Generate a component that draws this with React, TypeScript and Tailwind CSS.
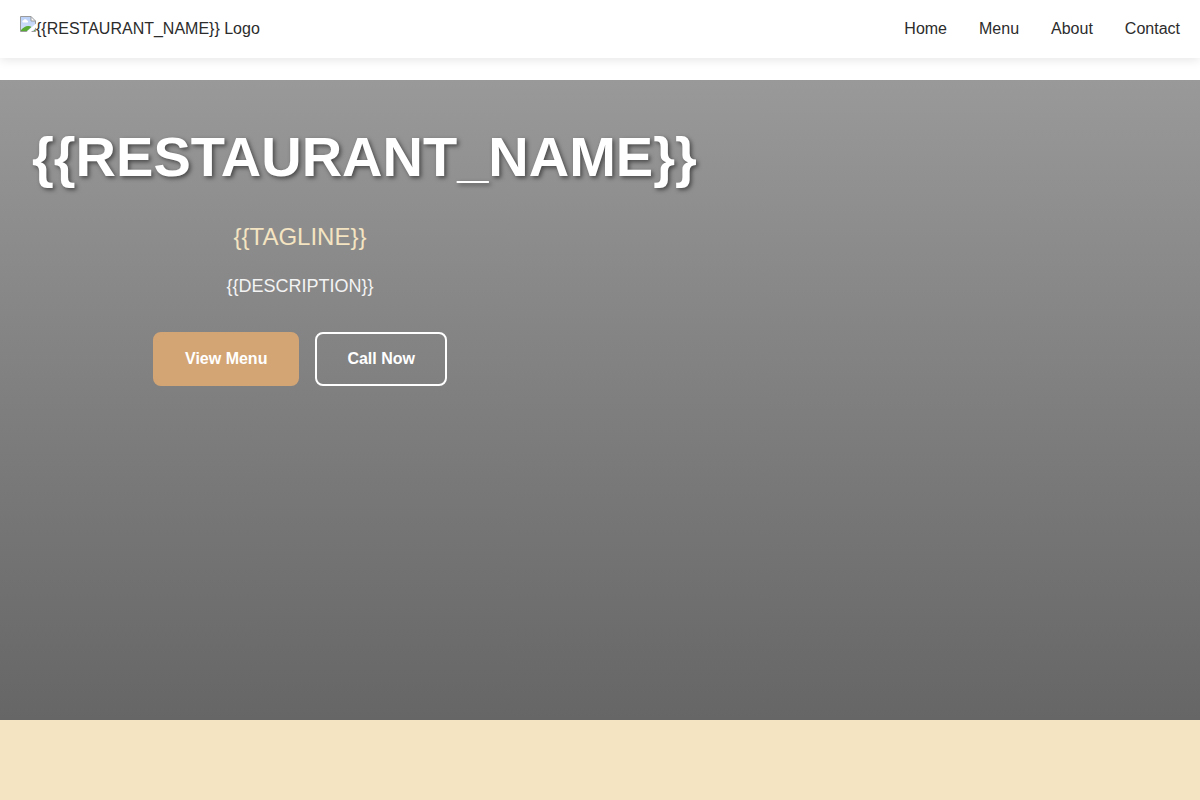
const links = [
  { label: "Home", href: "#home" },
  { label: "Menu", href: "#menu" },
  { label: "About", href: "#about" },
  { label: "Contact", href: "#contact" },
];

function BrokenImageIcon() {
  return (
    <svg className="h-4 w-4 shrink-0" viewBox="0 0 16 16" aria-hidden="true">
      <defs>
        <linearGradient id="sky" x1="0" y1="0" x2="0" y2="1">
          <stop offset="0" stopColor="#b9d0f8" />
          <stop offset="1" stopColor="#d5e2fa" />
        </linearGradient>
      </defs>
      <path d="M0.5 0.5H11L15.5 5V15.5H0.5Z" fill="url(#sky)" />
      <path
        d="M3 6.500a1.200 1.200 0 0 1 .5-2.300 1.900 1.900 0 0 1 3.500.2A1.100 1.100 0 0 1 7.500 6.500Z"
        fill="#fff"
      />
      <path
        d="M1 15V14C3 11.800 5.500 10 8 10c1.400 0 2.600.4 3.400 1L7 15Z"
        fill="#58ab35"
      />
      <path d="M13.500 15 15 13.600V15Z" fill="#58ab35" />
      <path d="M11 0.5V5H15.5Z" fill="#fff" />
      <path
        d="M0.5 0.5H11L15.5 5V15.5H0.5ZM11 0.5V5H15.5"
        fill="none"
        stroke="#9b9b9b"
      />
      <path d="M6.500 16 16 7.500V11.500L11 16Z" fill="#fff" />
    </svg>
  );
}

export default function App() {
  return (
    <div className="flex min-h-screen flex-col bg-white font-['Liberation_Sans',Arial,sans-serif] text-base leading-[26px] text-[#2c2c2c]">
      <header className="sticky top-0 z-10 bg-white shadow-[0_2px_10px_rgba(0,0,0,0.1)]">
        <div className="flex items-center justify-between px-5 py-4">
          <a href="#home" className="flex items-start">
            <BrokenImageIcon />
            <span>{"{{RESTAURANT_NAME}} Logo"}</span>
          </a>
          <nav aria-label="Main">
            <ul className="flex gap-8">
              {links.map((link) => (
                <li key={link.href}>
                  <a href={link.href}>{link.label}</a>
                </li>
              ))}
            </ul>
          </nav>
        </div>
      </header>
      <main className="flex grow flex-col pt-[22px]">
        <section
          id="home"
          className="grid min-h-[80vh] grid-cols-2 content-start bg-linear-to-b from-[#999999] to-[#666666]"
        >
          <div className="px-8 pt-8 text-center text-white">
            <h1 className="mb-4 text-left text-[56px] leading-[90px] font-bold [text-shadow:2px_2px_4px_rgba(0,0,0,0.5)]">
              {"{{RESTAURANT_NAME}}"}
            </h1>
            <p className="mb-4 text-2xl leading-[38px] text-[#f4e4c1]">
              {"{{TAGLINE}}"}
            </p>
            <p className="mb-8 text-lg leading-7 opacity-90">
              {"{{DESCRIPTION}}"}
            </p>
            <div className="flex justify-center gap-4 font-bold">
              <a
                href="#menu"
                className="rounded-lg border-2 border-[#d4a574] bg-[#d4a574] px-[30px] py-3"
              >
                View Menu
              </a>
              <a
                href="#contact"
                className="rounded-lg border-2 border-white px-[30px] py-3"
              >
                Call Now
              </a>
            </div>
          </div>
        </section>
        <section
          id="menu"
          aria-label="Menu"
          className="min-h-20 grow bg-[#f4e4c1]"
        />
      </main>
    </div>
  );
}
